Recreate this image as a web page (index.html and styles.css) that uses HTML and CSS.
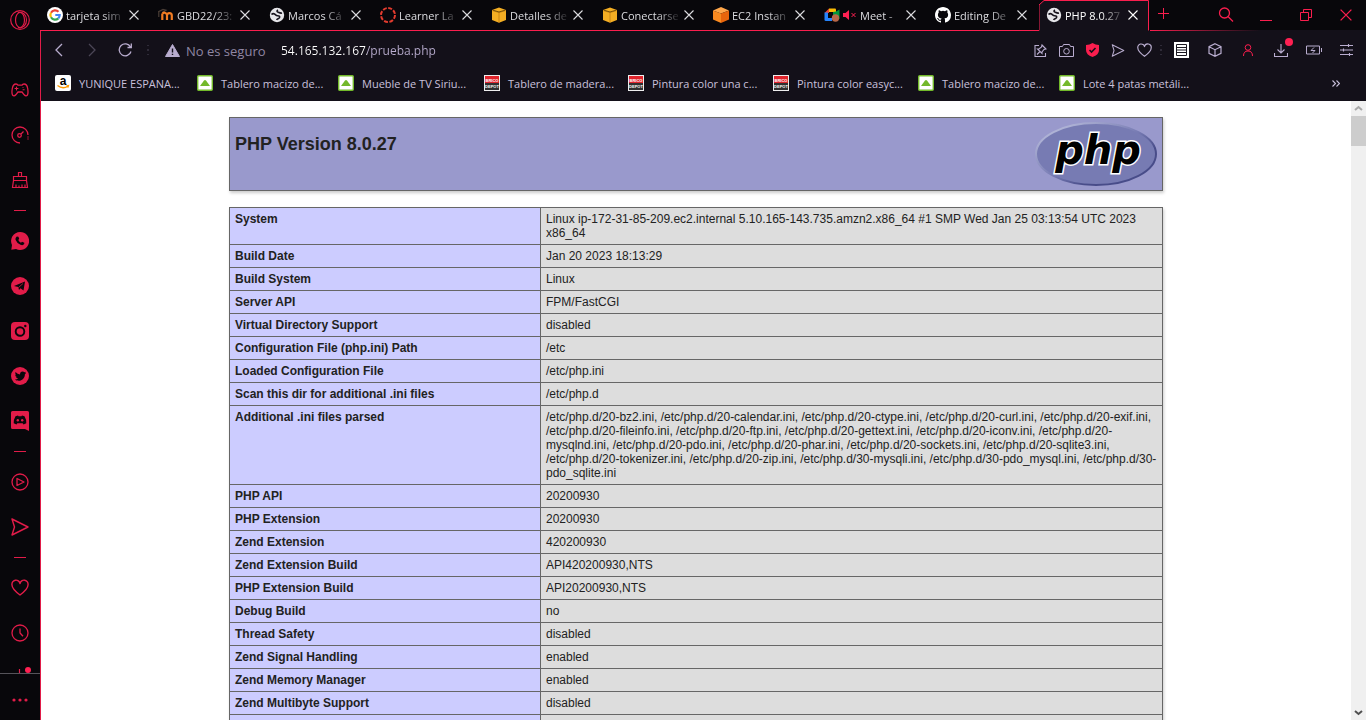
FILE: index.html
```html
<!DOCTYPE html>
<html lang="es">
<head>
<meta charset="utf-8">
<title>PHP 8.0.27 - phpinfo()</title>
<link rel="stylesheet" href="styles.css">
</head>
<body>
<svg class="defs" aria-hidden="true">
  <symbol id="x" viewBox="0 0 10 10"><path d="M.5.5l9 9M9.5.5l-9 9" fill="none" stroke="currentColor" stroke-width="1.1"/></symbol>
  <symbol id="globe" viewBox="0 0 16 16"><circle cx="8" cy="8" r="7.200" fill="#e6e6ea"/><path d="M2.500 7.500Q4 6 5.500 7c1.500 1 1.500 1.700 3 1.700 2 0 2.500 1 2 2-.7 1.300-2.300 1-2.800 2.300M9 3c-1 .5-1.500 1.500-.2 2 1.500.5 2 1.500 4.200 1" fill="none" stroke="#15121c" stroke-width="1.600"/></symbol>
  <symbol id="aws" viewBox="0 0 16 16"><path d="M1 3l7-2.500L15 3v10l-7 2.700L1 13z" fill="#f4ae23"/><path d="M1 3.500l7 2 7-2M8 5.500v10" fill="none" stroke="#c07c10" stroke-width=".8"/><path d="M2 3.200L8 5l6-1.800" fill="none" stroke="#7a5208" stroke-width="1"/></symbol>
  <symbol id="leroy" viewBox="0 0 16 16"><rect x=".7" y=".7" width="14.600" height="14.600" rx="1" fill="#fff" stroke="#73b92a" stroke-width="1.400"/><path d="M3 11L7 5.500q1-1 2 0L13 11z" fill="#73b92a"/></symbol>
  <symbol id="brico" viewBox="0 0 16 16"><rect width="16" height="16" fill="#eee"/><rect x="1" y="1" width="14" height="7" fill="#e0242c"/><rect x="1" y="8" width="14" height="7" fill="#303030"/></symbol>
  <symbol id="heart" viewBox="0 0 18 18"><path d="M9 16C5 13 1 9.500 1 6a4 4 0 0 1 8-1.500A4 4 0 0 1 17 6c0 3.500-4 7-8 10z" fill="none" stroke="currentColor" stroke-width="1.400" stroke-linejoin="round"/></symbol>
  <symbol id="send" viewBox="0 0 18 18"><path d="M1 1l16 8L1 17l2.500-8z" fill="none" stroke="currentColor" stroke-width="1.400" stroke-linejoin="round"/></symbol>
</svg>

<aside class="sidebar">
  <button class="logo" aria-label="Opera"><svg width="20" height="20" viewBox="0 0 20 20"><g fill="none" stroke="currentColor" stroke-width="1.200"><circle cx="10" cy="10" r="9.300"/><ellipse cx="10" cy="10" rx="4.500" ry="7.500"/><path d="M8 2.600c5-1.500 8.500 2.500 8.500 7.400s-3.500 9-8.500 7.400"/></g></svg></button>
  <nav class="rail">
    <button aria-label="GX Corner"><svg width="18" height="18" viewBox="0 0 18 18"><path d="M5 3Q6.500 3 7 4.200h4Q11.500 3 13 3q3 0 3.700 4.500T16.500 14q-1.500 1.800-3.300-.2L11 11H7l-2.200 2.800q-1.800 2-3.300.2-1-2-.2-6.500T5 3z" fill="none" stroke="currentColor" stroke-width="1.300"/><path d="M4 7.500h3M5.500 6v3M12 6.500v.01M12 8.700h1.200" stroke="currentColor" stroke-width="1.100" stroke-linecap="round"/></svg></button>
    <button aria-label="GX Control"><svg width="18" height="18" viewBox="0 0 18 18"><g fill="none" stroke="currentColor" stroke-width="1.300"><path d="M9 17A8 8 0 1 1 17 9"/><path d="M17 10.500V14" stroke-dasharray="1 1"/><circle cx="8.500" cy="9.500" r="1.800"/><path d="M10 8l2.500-2.500"/></g></svg></button>
    <button aria-label="GX Cleaner"><svg width="18" height="18" viewBox="0 0 18 18"><path d="M7.500 5.500v-4h3v4M2.500 5.500h13v4h-13zM2.500 9.500l-1 7h15l-1-7M5 16.500v-3M8 16.500v-2M11 16.500v-3M14 16.500v-3" fill="none" stroke="currentColor" stroke-width="1.200"/></svg></button>
    <hr>
    <button aria-label="WhatsApp"><svg width="18" height="18" viewBox="0 0 18 18"><path d="M9 0a9 9 0 1 1-4 17L.3 17.700 1 13A9 9 0 0 1 9 0z" fill="currentColor"/><path d="M5.800 4.500l1.600.3.800 2-.9 1.200q1 2 2.700 2.700l1-1 2.300 1-.1 1.400q-1.200 1.700-3.700.7-3.700-1.600-5-5-.4-2 1.300-3.300z" fill="#08070b"/></svg></button>
    <button aria-label="Telegram"><svg width="18" height="18" viewBox="0 0 18 18"><circle cx="9" cy="9" r="9" fill="currentColor"/><path d="M3 9l11-4.500-1.500 9-3-2.200-1.500 1.600-.7-3L3 9z" fill="#08070b"/><path d="M7.500 10.500L12 6.500" stroke="#e11c49" stroke-width=".7"/></svg></button>
    <button aria-label="Instagram"><svg width="18" height="18" viewBox="0 0 18 18"><rect width="18" height="18" rx="4" fill="currentColor"/><circle cx="9" cy="9.500" r="4.300" fill="none" stroke="#08070b" stroke-width="1.900"/><circle cx="14.300" cy="4" r="1.200" fill="#08070b"/></svg></button>
    <button aria-label="Twitter"><svg width="18" height="18" viewBox="0 0 18 18"><circle cx="9" cy="9" r="9" fill="currentColor"/><path d="M4.500 5q2 2.400 4.500 2.400 0-3 2.600-3 1.200 0 1.900.8l1.500-.5-.8 1.400.9-.1-1.200 1.300c0 4-3 6.500-6 6.500-1.600 0-3-.4-4-1.200q2 .1 3.200-1-1.600-.2-2.100-1.600h.8Q4.200 9.500 4.200 7.500l.9.2Q3.700 6.500 4.500 5z" fill="#08070b"/></svg></button>
    <button aria-label="Discord"><svg width="18" height="20" viewBox="0 0 18 20"><path d="M1.500 0h15A1.500 1.500 0 0 1 18 1.500V20l-4-2H1.500A1.500 1.500 0 0 1 0 16.500v-15A1.500 1.500 0 0 1 1.500 0z" fill="currentColor"/><path d="M4.500 5.200L7 4.500l.5.800h3l.5-.8 2.500.7q2 3.300 1.800 7L12.500 13.500l-.8-1.200H6.300l-.8 1.200-2.800-1.300q-.2-3.700 1.800-7z" fill="#08070b"/><circle cx="6.800" cy="9.300" r="1.200" fill="currentColor"/><circle cx="11.200" cy="9.300" r="1.200" fill="currentColor"/></svg></button>
    <hr>
    <button aria-label="Player"><svg width="18" height="18" viewBox="0 0 18 18"><g fill="none" stroke="currentColor" stroke-width="1.300" stroke-linejoin="round"><circle cx="9" cy="9" r="8"/><path d="M6 5.500l7 3.500-7 3.500z"/></g></svg></button>
    <button aria-label="Mi Flow"><svg width="18" height="18"><use href="#send"/></svg></button>
    <hr>
    <button aria-label="Favoritos"><svg width="18" height="18"><use href="#heart"/></svg></button>
    <button aria-label="Historial"><svg width="18" height="18" viewBox="0 0 18 18"><g fill="none" stroke="currentColor" stroke-width="1.300"><circle cx="9" cy="9" r="8"/><path d="M9 4.500V9l3 3.300"/></g></svg></button>
    <button class="cut" aria-label="Extensiones"><svg width="22" height="8" viewBox="0 0 22 8"><path d="M10.500 3v5" stroke="currentColor" stroke-width="1.200"/><circle cx="19" cy="4" r="3" fill="#ff2052"/></svg></button>
  </nav>
  <button class="rail-more" aria-label="Configurar barra lateral"><svg width="16" height="4" viewBox="0 0 16 4" fill="currentColor"><circle cx="2" cy="2" r="1.600"/><circle cx="8" cy="2" r="1.600"/><circle cx="14" cy="2" r="1.600"/></svg></button>
</aside>

<div class="window">
  <div class="tabbar">
    <div class="tab"><svg width="16" height="16" viewBox="0 0 16 16"><circle cx="8" cy="8" r="8" fill="#fff"/><g fill="none" stroke-width="2.200"><path d="M11.500 4.800A4.700 4.700 0 0 0 4 5.700" stroke="#ea4335"/><path d="M4 5.700a4.700 4.700 0 0 0 0 4.600" stroke="#fbbc05"/><path d="M4 10.300a4.700 4.700 0 0 0 7.300 1.100" stroke="#34a853"/><path d="M11.300 11.400Q12.700 10 12.700 8H8.300" stroke="#4285f4"/></g></svg><a href="#">tarjeta sim</a><button aria-label="Cerrar"><svg width="10" height="10"><use href="#x"/></svg></button></div>
    <div class="tab"><svg width="16" height="16" viewBox="0 0 16 16"><path d="M0 5l5-2.500 3 .8L4 5.500M.8 5v5" fill="none" stroke="#4a3d36" stroke-width="1.200"/><path d="M4.300 13V6.500M9 13V8.500a2.400 2.400 0 0 1 4.800 0V13M4.500 6.500Q7 4.500 9 7.500" fill="none" stroke="#f27c22" stroke-width="2.200"/></svg><a href="#">GBD22/23:</a><button aria-label="Cerrar"><svg width="10" height="10"><use href="#x"/></svg></button></div>
    <div class="tab"><svg width="16" height="16"><use href="#globe"/></svg><a href="#">Marcos Cá</a><button aria-label="Cerrar"><svg width="10" height="10"><use href="#x"/></svg></button></div>
    <div class="tab"><svg width="16" height="16" viewBox="0 0 16 16"><circle cx="8" cy="8" r="7" fill="none" stroke="#e23b2e" stroke-width="2" stroke-dasharray="4 1.500"/></svg><a href="#">Learner La</a><button aria-label="Cerrar"><svg width="10" height="10"><use href="#x"/></svg></button></div>
    <div class="tab"><svg width="16" height="16"><use href="#aws"/></svg><a href="#">Detalles de</a><button aria-label="Cerrar"><svg width="10" height="10"><use href="#x"/></svg></button></div>
    <div class="tab"><svg width="16" height="16"><use href="#aws"/></svg><a href="#">Conectarse</a><button aria-label="Cerrar"><svg width="10" height="10"><use href="#x"/></svg></button></div>
    <div class="tab"><svg width="16" height="16" viewBox="0 0 16 16"><path d="M8 0l8 3.500-8 3-8-3z" fill="#ffa64a"/><path d="M0 3.500l8 3V16l-8-3.500z" fill="#f98a20"/><path d="M16 3.500l-8 3V16l8-3.500z" fill="#e8650c"/></svg><a href="#">EC2 Instan</a><button aria-label="Cerrar"><svg width="10" height="10"><use href="#x"/></svg></button></div>
    <div class="tab"><svg width="16" height="16" viewBox="0 0 16 16"><path d="M.5 6L5 1.500V6z" fill="#ea4335"/><path d="M5 1.500h6q1 0 1 1V5H5z" fill="#fbbc05"/><path d="M.5 5.500H4V11H.5z" fill="#2684fc"/><path d="M.5 11H8v3H2q-1.500 0-1.500-1z" fill="#2684fc"/><path d="M9 5l3-.5 3.500-2V12L9 9z" fill="#00973c"/><circle cx="11.500" cy="11" r="3.700" fill="#b86748"/></svg><svg width="14" height="12" viewBox="0 0 14 12"><path d="M0 4h2.500L6 1v10L2.500 8H0z" fill="#ff2052"/><path d="M8.500 4l4 4M12.500 4l-4 4" stroke="#ff2052"/></svg><a href="#">Meet -</a><button aria-label="Cerrar"><svg width="10" height="10"><use href="#x"/></svg></button></div>
    <div class="tab"><svg width="16" height="16" viewBox="0 0 16 16"><path fill="#fff" d="M8 0C3.580 0 0 3.580 0 8c0 3.540 2.290 6.530 5.470 7.590.4.070.55-.17.55-.38 0-.19-.01-.82-.01-1.490-2.010.37-2.530-.49-2.690-.94-.09-.23-.48-.94-.82-1.130-.28-.15-.68-.52-.01-.53.63-.01 1.080.58 1.230.82.72 1.210 1.870.87 2.330.66.07-.52.28-.87.51-1.070-1.780-.2-3.640-.89-3.640-3.950 0-.87.31-1.590.82-2.150-.08-.2-.36-1.020.08-2.120 0 0 .67-.21 2.200.82a7.600 7.600 0 0 1 4 0c1.530-1.040 2.200-.82 2.200-.82.44 1.100.16 1.920.08 2.120.51.56.82 1.270.82 2.150 0 3.070-1.870 3.750-3.650 3.950.29.25.54.73.54 1.480 0 1.070-.01 1.930-.01 2.200 0 .21.15.46.55.38A8 8 0 0 0 16 8c0-4.420-3.580-8-8-8z"/></svg><a href="#">Editing De</a><button aria-label="Cerrar"><svg width="10" height="10"><use href="#x"/></svg></button></div>
    <div class="tab active"><svg class="outline" viewBox="0 0 111 31" preserveAspectRatio="none"><path d="M0 31V4.500L4.500.5h105V31z" fill="#131019"/><path d="M0 30.500V5L5 .5h104.500v30" fill="none" stroke="#fa1e4e"/></svg><svg width="16" height="16"><use href="#globe"/></svg><a href="#">PHP 8.0.27</a><button aria-label="Cerrar"><svg width="10" height="10"><use href="#x"/></svg></button></div>
    <div class="tabbar-end">
      <button class="newtab" aria-label="Nueva pestaña"><svg width="12" height="12" viewBox="0 0 12 12"><path d="M5.500 0v11M0 5.500h11" stroke="currentColor"/></svg></button>
      <div class="controls">
        <button aria-label="Buscar en pestañas"><svg width="16" height="16" viewBox="0 0 16 16"><g fill="none" stroke="currentColor" stroke-width="1.300"><circle cx="6.500" cy="6" r="5"/><path d="M10 9.500l5 5"/></g></svg></button>
        <button aria-label="Minimizar"><svg width="12" height="12" viewBox="0 0 12 12"><path d="M0 11.500h12" stroke="currentColor"/></svg></button>
        <button aria-label="Restaurar"><svg width="12" height="12" viewBox="0 0 12 12"><path d="M.5 3.500h8v8h-8zM3.500 3.500v-3h8v8h-3" fill="none" stroke="currentColor"/></svg></button>
        <button aria-label="Cerrar ventana"><svg width="12" height="12"><use href="#x"/></svg></button>
      </div>
    </div>
  </div>

  <div class="shell">
    <div class="toolbar">
      <button aria-label="Atrás"><svg width="8" height="14" viewBox="0 0 8 14"><path d="M7 1L1 7l6 6" fill="none" stroke="currentColor" stroke-width="1.300"/></svg></button>
      <button class="dim" aria-label="Adelante"><svg width="8" height="14" viewBox="0 0 8 14"><path d="M1 1l6 6-6 6" fill="none" stroke="currentColor" stroke-width="1.300"/></svg></button>
      <button aria-label="Recargar"><svg width="14" height="14" viewBox="0 0 14 14"><path d="M13 8.500A6 6 0 1 1 12.500 4M13.300.5v4H9.500" fill="none" stroke="currentColor" stroke-width="1.300"/></svg></button>
      <span class="grip"></span>
      <svg class="warning" width="15" height="13" viewBox="0 0 15 13"><path d="M7.500.5L14.500 12.500H.5z" fill="#b9adcf" stroke="#b9adcf" stroke-linejoin="round"/><path d="M7.500 4.500v4M7.500 9.700v1.300" stroke="#131019" stroke-width="1.400"/></svg>
      <label class="security" for="url">No es seguro</label>
      <input id="url" class="url" type="text" value="54.165.132.167/prueba.php" spellcheck="false">
      <div class="page-tools">
        <button aria-label="Editar"><svg width="13" height="13" viewBox="0 0 13 13"><path d="M5 1.500H1v11h10.500V9M8 1l4 4-2 .5L8 8v1.500L3.500 5H5l2.500-2zM6 7.500L3 10.500" fill="none" stroke="currentColor" stroke-width="1.100"/></svg></button>
        <button aria-label="Captura"><svg width="15" height="13" viewBox="0 0 15 13"><path d="M.5 2.500h3l1-2h6l1 2h3v10H.5z" fill="none" stroke="currentColor"/><circle cx="7.500" cy="7.300" r="2.800" fill="none" stroke="currentColor"/></svg></button>
        <button aria-label="Bloqueador"><svg width="13" height="14" viewBox="0 0 13 14"><path d="M6.500 0q3 1.800 6.500 2v5q0 5-6.500 7Q0 12 0 7V2q3.500-.2 6.500-2z" fill="#fa1e4e"/><path d="M3.500 7l2 2 4-4" fill="none" stroke="#131019" stroke-width="1.600"/></svg></button>
        <button aria-label="Enviar"><svg width="14" height="13"><use href="#send"/></svg></button>
        <button aria-label="Marcador"><svg width="15" height="15"><use href="#heart"/></svg></button>
      </div>
      <span class="grip short"></span>
      <div class="extensions">
        <button aria-label="Lector"><svg width="15" height="16" viewBox="0 0 15 16"><rect width="15" height="16" fill="#fff"/><path d="M2.500 2.500h10v11h-10zM2 5.500h11M2 8h11M2 10.500h11" fill="none" stroke="#1a1720" stroke-width="1"/></svg></button>
        <button aria-label="Cubo"><svg width="14" height="14" viewBox="0 0 14 14"><path d="M7 .7l6 3v6.600l-6 3-6-3V3.700zM1 3.700l6 3 6-3M7 6.700v6.600" fill="none" stroke="currentColor" stroke-width="1.200"/></svg></button>
        <button class="red" aria-label="Perfil"><svg width="10" height="12" viewBox="0 0 10 12"><circle cx="5" cy="3.500" r="2.800" fill="none" stroke="currentColor"/><path d="M.5 12q0-5 4.500-5t4.500 5" fill="none" stroke="currentColor"/></svg></button>
        <button class="download" aria-label="Descargas"><svg width="14" height="14" viewBox="0 0 14 14"><path d="M7 1v9M3.500 6.500L7 10l3.500-3.500M.5 10v3.500h13V10" fill="none" stroke="currentColor" stroke-width="1.100"/></svg><i class="dot"></i></button>
        <button aria-label="Batería"><svg width="16" height="10" viewBox="0 0 16 10"><path d="M.5 1h13v8H.5zM15.500 3v4M8 2.500L5 5.500h4L6.500 8" fill="none" stroke="currentColor"/></svg></button>
        <button aria-label="Configuración fácil"><svg width="13" height="12" viewBox="0 0 13 12"><path d="M0 1.500h13M0 6h13M0 10.500h13M8.500 0v3M3.500 4.500v3M9.500 9v3" stroke="currentColor" stroke-width="1.100"/></svg></button>
      </div>
    </div>

    <nav class="bookmarks">
      <div class="links">
        <a href="#"><svg width="16" height="16" viewBox="0 0 16 16"><rect width="16" height="16" rx="2" fill="#fff"/><text x="8" y="10" class="amazon-text">a</text><path d="M2.500 10.500q5 4 10.500.8M11.500 10.800l2-.3-.6 2" fill="none" stroke="#f90" stroke-width="1.300"/></svg><span>YUNIQUE ESPANA...</span></a>
        <a href="#"><svg width="16" height="16"><use href="#leroy"/></svg><span>Tablero macizo de...</span></a>
        <a href="#"><svg width="16" height="16"><use href="#leroy"/></svg><span>Mueble de TV Siriu...</span></a>
        <a href="#"><svg width="16" height="16"><use href="#brico"/><text x="8" y="7" class="brico-text">BRICO</text><text x="8" y="13" class="brico-text">DEPOT</text></svg><span>Tablero de madera...</span></a>
        <a href="#"><svg width="16" height="16"><use href="#brico"/><text x="8" y="7" class="brico-text">BRICO</text><text x="8" y="13" class="brico-text">DEPOT</text></svg><span>Pintura color una c...</span></a>
        <a href="#"><svg width="16" height="16"><use href="#brico"/><text x="8" y="7" class="brico-text">BRICO</text><text x="8" y="13" class="brico-text">DEPOT</text></svg><span>Pintura color easyc...</span></a>
        <a href="#"><svg width="16" height="16"><use href="#leroy"/></svg><span>Tablero macizo de...</span></a>
        <a href="#"><svg width="16" height="16"><use href="#leroy"/></svg><span>Lote 4 patas metáli...</span></a>
      </div>
      <button aria-label="Más marcadores"><svg width="8" height="7" viewBox="0 0 8 7"><path d="M.5.5l3 3-3 3M4.500.5l3 3-3 3" fill="none" stroke="currentColor" stroke-width="1.100"/></svg></button>
    </nav>

    <div class="viewport">
      <main class="phpinfo">
        <header class="banner">
          <h1>PHP Version 8.0.27</h1>
          <svg width="122" height="64" viewBox="0 0 122 64" role="img" aria-label="PHP logo">
            <defs><linearGradient id="rim" x1="0" y1="0" x2="1" y2="1"><stop offset=".15" stop-color="#aeb2d5"/><stop offset=".5" stop-color="#777bb3"/><stop offset=".7" stop-color="#484c89"/></linearGradient></defs>
            <ellipse cx="61" cy="32" rx="60" ry="31" fill="#777bb3" stroke="url(#rim)" stroke-width="2"/>
            <text x="63" y="42" class="logo-text">php</text>
          </svg>
        </header>
        <table>
          <tbody>
            <tr><th scope="row">System</th><td>Linux ip-172-31-85-209.ec2.internal 5.10.165-143.735.amzn2.x86_64 #1 SMP Wed Jan 25 03:13:54 UTC 2023 x86_64</td></tr>
            <tr><th scope="row">Build Date</th><td>Jan 20 2023 18:13:29</td></tr>
            <tr><th scope="row">Build System</th><td>Linux</td></tr>
            <tr><th scope="row">Server API</th><td>FPM/FastCGI</td></tr>
            <tr><th scope="row">Virtual Directory Support</th><td>disabled</td></tr>
            <tr><th scope="row">Configuration File (php.ini) Path</th><td>/etc</td></tr>
            <tr><th scope="row">Loaded Configuration File</th><td>/etc/php.ini</td></tr>
            <tr><th scope="row">Scan this dir for additional .ini files</th><td>/etc/php.d</td></tr>
            <tr><th scope="row">Additional .ini files parsed</th><td>/etc/php.d/20-bz2.ini, /etc/php.d/20-calendar.ini, /etc/php.d/20-ctype.ini, /etc/php.d/20-curl.ini, /etc/php.d/20-exif.ini, /etc/php.d/20-fileinfo.ini, /etc/php.d/20-ftp.ini, /etc/php.d/20-gettext.ini, /etc/php.d/20-iconv.ini, /etc/php.d/20-mysqlnd.ini, /etc/php.d/20-pdo.ini, /etc/php.d/20-phar.ini, /etc/php.d/20-sockets.ini, /etc/php.d/20-sqlite3.ini, /etc/php.d/20-tokenizer.ini, /etc/php.d/20-zip.ini, /etc/php.d/30-mysqli.ini, /etc/php.d/30-pdo_mysql.ini, /etc/php.d/30-pdo_sqlite.ini</td></tr>
            <tr><th scope="row">PHP API</th><td>20200930</td></tr>
            <tr><th scope="row">PHP Extension</th><td>20200930</td></tr>
            <tr><th scope="row">Zend Extension</th><td>420200930</td></tr>
            <tr><th scope="row">Zend Extension Build</th><td>API420200930,NTS</td></tr>
            <tr><th scope="row">PHP Extension Build</th><td>API20200930,NTS</td></tr>
            <tr><th scope="row">Debug Build</th><td>no</td></tr>
            <tr><th scope="row">Thread Safety</th><td>disabled</td></tr>
            <tr><th scope="row">Zend Signal Handling</th><td>enabled</td></tr>
            <tr><th scope="row">Zend Memory Manager</th><td>enabled</td></tr>
            <tr><th scope="row">Zend Multibyte Support</th><td>disabled</td></tr>
            <tr><th scope="row">&nbsp;</th><td>&nbsp;</td></tr>
          </tbody>
        </table>
      </main>
      <div class="scrollbar">
        <svg width="15" height="15" viewBox="0 0 15 15"><path d="M4 9l3.500-3L11 9" fill="none" stroke="#a8a8a8" stroke-width="2"/></svg>
        <div class="thumb"></div>
        <svg width="15" height="15" viewBox="0 0 15 15"><path d="M4 6l3.500 3L11 6" fill="none" stroke="#505050" stroke-width="2"/></svg>
      </div>
    </div>
  </div>
</div>
</body>
</html>
```
FILE: styles.css
```css
* { box-sizing: border-box; }

body {
  margin: 0;
  height: 100vh;
  display: flex;
  overflow: hidden;
  background: #08070b;
  color: #c9c0dc;
  font-family: "Open Sans", "Noto Sans", sans-serif;
  font-size: 11px;
}

button {
  display: flex;
  align-items: center;
  justify-content: center;
  flex: none;
  padding: 0;
  border: 0;
  background: none;
  color: inherit;
}

a { color: inherit; text-decoration: none; }
svg { flex: none; }
.defs { position: absolute; width: 0; height: 0; }

/* Sidebar */
.sidebar {
  flex: none;
  width: 40px;
  display: flex;
  flex-direction: column;
  color: #e11c49;
}
.logo { height: 40px; }
.rail {
  flex: 1;
  min-height: 0;
  padding-top: 27px;
  overflow: hidden;
}
.rail button { width: 40px; height: 45px; }
.rail .cut { height: 30px; }
.rail hr {
  width: 12px;
  height: 1px;
  margin: 8px auto 7px;
  border: 0;
  background: #e11c49;
}
.rail-more {
  height: 47px;
  padding-bottom: 6px;
  padding-top: 12px;
  border-top: 1px solid #55535a;
}

/* Tabs */
.window {
  flex: 1;
  min-width: 0;
  display: flex;
  flex-direction: column;
}
.tabbar { display: flex; flex: none; height: 31px; }
.tab {
  position: relative;
  flex: 0 1 111px;
  min-width: 0;
  display: flex;
  align-items: center;
  gap: 3px;
  padding: 0 12px 0 7px;
  border-bottom: 1px solid #fa1e4e;
  color: #dcdce0;
}
.tab a {
  position: relative;
  flex: 1;
  min-width: 0;
  white-space: nowrap;
  mask-image: linear-gradient(to right, #000 60%, transparent);
}
.tab button { position: relative; width: 10px; }
.tab.active { border-bottom-color: transparent; color: #fff; }
.tab.active > svg { position: relative; }
.tab.active > .outline {
  position: absolute;
  top: 0;
  left: 0;
  width: 100%;
  height: 31px;
}
.tabbar-end {
  flex: 1;
  display: flex;
  justify-content: space-between;
  color: #fa1e4e;
  background: linear-gradient(to right, #fa1e4e, #131019 110px) bottom / 100% 1px no-repeat;
}
.newtab { width: 28px; height: 28px; }
.controls { display: flex; }
.controls button { width: 40px; height: 30px; }

/* Address bar */
.shell {
  flex: 1;
  min-height: 0;
  display: flex;
  flex-direction: column;
  border-left: 1px solid #e11c49;
  background: #131019;
}
.toolbar {
  flex: none;
  display: flex;
  align-items: center;
  height: 38px;
  padding: 0 3px 0 1px;
  color: #b9adcf;
}
.toolbar > button, .extensions button { width: 33px; height: 30px; }
.toolbar > .dim { color: #4b4656; }
.toolbar .red { color: #fa1e4e; }
.grip {
  width: 14px;
  height: 10px;
  background: radial-gradient(#4b4656 1px, transparent 1px) center / 14px 5px;
}
.grip.short { width: 8px; }
.warning { margin: 0 6px 0 10px; }
.security { width: 95px; padding-top: 2px; font-size: 13px; color: #8f86a3; }
.url {
  flex: 1;
  min-width: 0;
  padding: 0;
  border: 0;
  outline: 0;
  font: 12px "Open Sans", "Noto Sans", sans-serif;
  color: transparent;
  background: linear-gradient(to right, #fff 86px, #b9adcf 86px);
  background-clip: text;
}
.page-tools, .extensions { display: flex; flex: none; }
.page-tools button { width: 26px; height: 30px; }
.download { position: relative; }
.dot {
  position: absolute;
  top: 3px;
  right: 4px;
  width: 8px;
  height: 8px;
  border-radius: 50%;
  background: #ff2052;
}

/* Bookmarks */
.bookmarks {
  flex: none;
  display: flex;
  justify-content: space-between;
  height: 32px;
  padding: 0 24px 4px 14px;
}
.links {
  display: grid;
  grid-template-columns: 142px 141px 146px 144px 145px 145px 141px auto;
  align-items: center;
}
.links a {
  display: flex;
  align-items: center;
  gap: 8px;
  white-space: nowrap;
}
.bookmarks button { width: 12px; }
.brico-text { font: bold 4px "Liberation Sans", sans-serif; fill: #fff; text-anchor: middle; }
.amazon-text { font: bold 12px "Liberation Sans", sans-serif; fill: #000; text-anchor: middle; }

/* Page */
.viewport {
  flex: 1;
  min-height: 0;
  display: flex;
  background: #fff;
  color: #222;
  font-family: "Liberation Sans", Arial, sans-serif;
}
.phpinfo { flex: 1; min-width: 0; overflow: hidden; padding: 16px; }
.banner, .phpinfo table {
  width: 100%;
  max-width: 934px;
  margin: 0 auto 16px;
  box-shadow: 1px 2px 3px #ccc;
}
.banner {
  display: flex;
  justify-content: space-between;
  padding: 4px 5px;
  border: 1px solid #666;
  background: #99c;
}
.banner h1 {
  margin: 12px 0 0;
  font-size: 18px;
  line-height: 21px;
}
.logo-text {
  font: italic bold 40px "DejaVu Sans", sans-serif;
  text-anchor: middle;
  fill: #000;
  stroke: #fff;
  stroke-width: 3px;
  paint-order: stroke;
}
.phpinfo table { border-collapse: collapse; font-size: 12px; line-height: 14px; }
.phpinfo th, .phpinfo td {
  padding: 4px 5px;
  border: 1px solid #666;
  text-align: left;
  vertical-align: top;
}
.phpinfo th { width: 311px; background: #ccf; }
.phpinfo td { background: #ddd; }

.scrollbar {
  flex: none;
  width: 15px;
  display: flex;
  flex-direction: column;
  background: #f0f0f0;
}
.thumb { height: 30px; margin-bottom: auto; background: #cdcdcd; }
```
